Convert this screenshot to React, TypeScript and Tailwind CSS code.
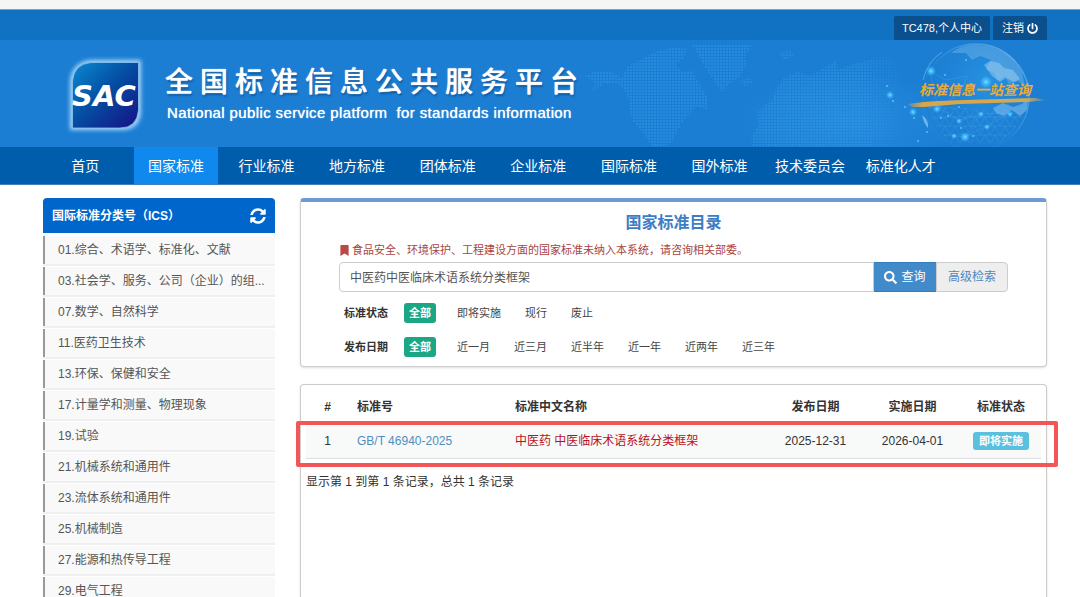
import { useState } from "react";
import { FaBookmark, FaPowerOff, FaSearch, FaSyncAlt } from "react-icons/fa";

const navItems = [
  "首页",
  "国家标准",
  "行业标准",
  "地方标准",
  "团体标准",
  "企业标准",
  "国际标准",
  "国外标准",
  "技术委员会",
  "标准化人才",
];

const icsItems = [
  "01.综合、术语学、标准化、文献",
  "03.社会学、服务、公司（企业）的组...",
  "07.数学、自然科学",
  "11.医药卫生技术",
  "13.环保、保健和安全",
  "17.计量学和测量、物理现象",
  "19.试验",
  "21.机械系统和通用件",
  "23.流体系统和通用件",
  "25.机械制造",
  "27.能源和热传导工程",
  "29.电气工程",
];

const statusOptions = ["全部", "即将实施", "现行", "废止"];
const dateOptions = ["全部", "近一月", "近三月", "近半年", "近一年", "近两年", "近三年"];

const Logo = () => {
  return (
    <svg viewBox="0 0 84 84" className="h-[84px] w-[84px] shrink-0" role="img" aria-label="SAC">
      <defs>
        <linearGradient id="logoFill" x1="0" y1="0" x2="1" y2="1">
          <stop offset="0" stopColor="#0a8ad2" />
          <stop offset="0.45" stopColor="#0450a4" />
          <stop offset="1" stopColor="#160f84" />
        </linearGradient>
        <filter id="glow" x="-20%" y="-20%" width="140%" height="140%">
          <feGaussianBlur stdDeviation="2" />
        </filter>
      </defs>
      <path d="M28 7H78V59Q77 77 58 77H7V28Q9 9 28 7Z" fill="#a9d6f8" filter="url(#glow)" />
      <path d="M28 9.500H75.500V57Q74 75 57 75H9.500V28Q11 11 28 9.500Z" fill="url(#logoFill)" stroke="#8cc4f0" strokeWidth="0.800" />
      <text
        x="9"
        y="53"
        fontSize="29"
        fontWeight="700"
        fontStyle="italic"
        fontFamily="DejaVu Sans, sans-serif"
        fill="#fff"
      >
        SAC
      </text>
    </svg>
  );
};

// dotted world map and the globe on the right side of the banner
const BannerArt = () => {
  return (
    <svg
      viewBox="580 40 500 107"
      className="absolute top-0 right-0 h-[107px] w-[500px]"
      aria-hidden="true"
    >
      <defs>
        <pattern id="dots" width="3" height="3" patternUnits="userSpaceOnUse">
          <rect width="2" height="2" fill="#36a0ea" />
        </pattern>
        <linearGradient id="fade" gradientUnits="userSpaceOnUse" x1="860" y1="0" x2="905" y2="0">
          <stop offset="0" stopColor="#fff" />
          <stop offset="1" stopColor="#000" />
        </linearGradient>
        <mask id="mapMask" maskUnits="userSpaceOnUse" x="580" y="40" width="340" height="107">
          <rect x="580" y="40" width="340" height="107" fill="url(#fade)" />
        </mask>
        <radialGradient id="globe" cx="0.6" cy="0.35" r="0.7">
          <stop offset="0" stopColor="#2e9be6" stopOpacity="0.700" />
          <stop offset="0.7" stopColor="#1d82d6" stopOpacity="0.400" />
          <stop offset="1" stopColor="#1b7ed3" stopOpacity="0.150" />
        </radialGradient>
        <radialGradient id="halo">
          <stop offset="0" stopColor="#2b93e4" stopOpacity="0.600" />
          <stop offset="1" stopColor="#2b93e4" stopOpacity="0" />
        </radialGradient>
        <radialGradient id="spark">
          <stop offset="0" stopColor="#7be4ff" />
          <stop offset="0.4" stopColor="#44c0ff" stopOpacity="0.850" />
          <stop offset="1" stopColor="#44c0ff" stopOpacity="0" />
        </radialGradient>
        <linearGradient id="brush" x1="0" x2="1">
          <stop offset="0" stopColor="#d8a548" stopOpacity="0.300" />
          <stop offset="0.1" stopColor="#dba544" />
          <stop offset="0.85" stopColor="#d5a755" />
          <stop offset="1" stopColor="#c9a766" stopOpacity="0.100" />
        </linearGradient>
        <linearGradient id="shell" x1="0" y1="1" x2="1" y2="0">
          <stop offset="0.45" stopColor="#9fd0f5" stopOpacity="0.050" />
          <stop offset="1" stopColor="#9fd0f5" stopOpacity="0.600" />
        </linearGradient>
        <pattern id="mesh" width="10" height="9" patternUnits="userSpaceOnUse">
          <path d="M0 9L5 0L10 9M0 0H10M0 9H10" stroke="#7cc0f2" strokeWidth="0.400" fill="none" opacity="0.400" />
        </pattern>
      </defs>
      <ellipse cx="850" cy="120" rx="110" ry="50" fill="url(#halo)" />
      <g fill="url(#dots)" opacity="0.400" mask="url(#mapMask)">
        <path d="M585 76L596 71L612 72L622 78L628 92L618 84L604 84L590 92L596 84Z" />
        <path d="M627 66L640 60L656 52L673 47L688 49L684 58L676 64L682 72L692 70L698 82L707 96L708 110L696 106L690 114L682 122L678 130L672 142L664 147H652L643 133L632 120L628 96L620 84Z" />
        <path d="M692 44H752L745 56L746 64L740 76L730 84L722 92L716 84L708 72L700 58Z" />
        <path d="M779 53L790 51L794 55L785 60ZM741 80L750 78L752 83L743 86Z" />
        <path d="M753 147L751 138L758 126L757 112L766 105L773 100L776 88L784 78L797 72L810 76L824 68L836 60L838 70L853 64L870 60L887 57L905 66V147Z" />
      </g>
      <circle cx="976" cy="97" r="53" fill="url(#globe)" />
      <path d="M927 103Q970 112 1025 108Q1018 130 1000 143H953Q932 130 927 103Z" fill="url(#mesh)" />
      <circle cx="976" cy="97" r="53" fill="none" stroke="url(#shell)" strokeWidth="1.300" />
      <path d="M951 53Q962 44 977 45Q1000 46 1014 60L1022 72L1025 86L1018 81L1009 84L1005 76L998 81L994 73L986 69L991 60L980 56L972 60L966 53Z" fill="#8fc6ee" opacity="0.350" />
      <path d="M984 65L990 61L999 63L1004 68L1013 70L1020 79L1014 82L1006 78L1000 82L992 76Z" fill="#a8d4f4" opacity="0.450" />
      <path d="M993 108L1003 103L1013 107L1022 104L1028 98L1027 110L1020 116L1012 110L1004 116L996 113Z" fill="#9bcdf2" opacity="0.450" />
      <path d="M922 115Q924 124 928 128Q929 120 922 115Z" fill="#8ecbf5" opacity="0.700" />
      <path d="M923 80Q927 62 942 52" stroke="#8ecbf5" strokeWidth="1" fill="none" opacity="0.500" />
      <path d="M930 71L946 80L967 76L962 92L938 108L960 120L980 114L965 137L954 136M980 114L1010 113L987 126L965 137M938 108L930 71" stroke="#6fbdf0" strokeWidth="0.500" fill="none" opacity="0.400" />
      <g fill="url(#spark)">
        <circle cx="890" cy="95" r="4" />
        <circle cx="913" cy="112" r="4" />
        <circle cx="931" cy="71" r="5" />
        <circle cx="937" cy="109" r="4" />
        <circle cx="965" cy="137" r="5" />
        <circle cx="954" cy="136" r="3" />
        <circle cx="986" cy="82" r="6" />
        <circle cx="981" cy="114" r="3" />
        <circle cx="959" cy="121" r="3" />
        <circle cx="987" cy="127" r="3" />
        <circle cx="1010" cy="114" r="3" />
      </g>
      <g fill="#5bcbff">
        <circle cx="887" cy="86" r="0.900" />
        <circle cx="893" cy="101" r="0.900" />
        <circle cx="905" cy="107" r="0.900" />
        <circle cx="914" cy="118" r="0.900" />
        <circle cx="945" cy="75" r="0.900" />
        <circle cx="966" cy="60" r="0.900" />
        <circle cx="948" cy="116" r="0.900" />
        <circle cx="941" cy="118" r="0.900" />
        <circle cx="961" cy="128" r="0.900" />
        <circle cx="973" cy="136" r="0.900" />
        <circle cx="927" cy="132" r="0.900" />
        <circle cx="918" cy="141" r="0.900" />
        <circle cx="959" cy="107" r="0.900" />
      </g>
      <path d="M908 104Q925 101 965 100L1035 98L1047 100L1028 102L960 104L924 107L912 107Z" fill="url(#brush)" />
      <text
        x="919"
        y="95"
        fontSize="14"
        fontStyle="italic"
        fontWeight="700"
        fontFamily="Noto Sans CJK SC, sans-serif"
        fill="#e9aa3a"
      >
        标准信息一站查询
      </text>
    </svg>
  );
};

const Header = () => {
  return (
    <header>
      <div className="h-[9px] bg-[#f5f5f5]" />
      <div className="flex h-[31px] items-end justify-end gap-[3px] border-t border-[#6fa3d8] bg-[#1172c4] pr-[33px] text-[11px] text-white">
        <a href="#" className="flex h-6 items-center rounded-t-xs bg-[#0b4f8c] px-2">
          TC478,个人中心
        </a>
        <a href="#" className="flex h-6 items-center gap-[3px] rounded-t-xs bg-[#0b4f8c] px-[9px]">
          注销 <FaPowerOff />
        </a>
      </div>
      <div className="relative flex h-[107px] items-center gap-[18px] bg-[#1b7ed3] pt-[2px] pl-[63px]">
        <BannerArt />
        <Logo />
        <div className="relative text-white">
          <h1 className="text-[28px] leading-[36px] font-medium tracking-[0.25em] [text-shadow:0_0_1px_#fff,1px_2px_2px_rgba(0,50,110,0.5)]">
            全国标准信息公共服务平台
          </h1>
          <p className="pl-[2px] text-[15px] leading-6 tracking-wide whitespace-pre [text-shadow:0_0_1px_#fff]">
            National public service platform  for standards information
          </p>
        </div>
      </div>
    </header>
  );
};

const Nav = () => {
  const [active, setActive] = useState("国家标准");

  return (
    <nav className="border-b border-[#3f7fc0] bg-[#005dac] pl-10">
      <ul className="grid max-w-[906px] grid-cols-10">
        {navItems.map((item) => (
          <li key={item} className="px-[3px]">
            <a
              href="#"
              onClick={() => setActive(item)}
              className={`flex h-[37px] items-center justify-center text-sm whitespace-nowrap text-white ${
                active === item ? "bg-[#1089ee]" : ""
              }`}
            >
              {item}
            </a>
          </li>
        ))}
      </ul>
    </nav>
  );
};

const Sidebar = () => {
  return (
    <aside className="w-[232px] shrink-0">
      <div className="flex h-[35px] items-center justify-between rounded-t bg-[#0066cc] px-[9px] text-white">
        <h2 className="text-xs font-bold">国际标准分类号（ICS）</h2>
        <button type="button" aria-label="刷新">
          <FaSyncAlt className="text-base" />
        </button>
      </div>
      <ul className="flex flex-col gap-px pt-[3px]">
        {icsItems.map((item) => (
          <li key={item} className="border-b-2 border-[#efefef]">
            <a
              href="#"
              className="block border-l-2 border-[#999] bg-[#f9f9f9] pl-[13px] text-xs leading-7 whitespace-nowrap text-[#555]"
            >
              {item}
            </a>
          </li>
        ))}
      </ul>
    </aside>
  );
};

type FilterRowProps = {
  label: string;
  options: string[];
};

const FilterRow = ({ label, options }: FilterRowProps) => {
  const [selected, setSelected] = useState(options[0]);

  return (
    <div className="flex h-5 items-center text-[11px] text-[#444]">
      <span className="w-[60px] font-bold text-[#333]">{label}</span>
      <div className="flex items-center gap-3">
        {options.map((option) => (
          <button
            key={option}
            type="button"
            onClick={() => setSelected(option)}
            className={`h-5 rounded-[3px] ${
              selected === option ? "mr-[3px] bg-[#1ba784] px-[5px] font-bold text-white" : "px-[6px]"
            }`}
          >
            {option}
          </button>
        ))}
      </div>
    </div>
  );
};

const SearchPanel = () => {
  const [keyword, setKeyword] = useState("中医药中医临床术语系统分类框架");

  return (
    <section className="rounded border border-t-4 border-[#ccc] border-t-[#6c9bd2] pr-[38px] pb-[9px] pl-[38px] shadow-sm">
      <h2 className="pt-[9px] text-center text-base leading-6 font-bold text-[#3c7dc6]">国家标准目录</h2>
      <p className="mt-[3px] flex h-6 items-center gap-[2px] text-[11px] text-[#a94442]">
        <FaBookmark className="text-[11px] text-[#b94a48]" />
        食品安全、环境保护、工程建设方面的国家标准未纳入本系统，请咨询相关部委。
      </p>
      <form className="flex h-[30px] text-xs" onSubmit={(e) => e.preventDefault()}>
        <input
          type="text"
          aria-label="标准关键词"
          value={keyword}
          onChange={(e) => setKeyword(e.target.value)}
          className="min-w-0 flex-1 rounded-l border border-[#ccc] px-[10px] pt-[2px] text-[#555] outline-none"
        />
        <button
          type="submit"
          className="flex w-[62px] items-center justify-center gap-1 border-y border-[#357ebd] bg-[#428bca] text-white"
        >
          <FaSearch className="text-[13px]" />
          查询
        </button>
        <button type="button" className="w-[72px] rounded-r border border-[#ccc] bg-[#eee] text-[#5087c1]">
          高级检索
        </button>
      </form>
      <div className="mt-[11px] flex flex-col gap-[14px] pl-[5px]">
        <FilterRow label="标准状态" options={statusOptions} />
        <FilterRow label="发布日期" options={dateOptions} />
      </div>
    </section>
  );
};

const ResultPanel = () => {
  return (
    <section className="relative flex-1 rounded-t border border-b-0 border-[#ccc] px-[5px] pt-[5px] text-xs text-[#333] shadow-sm">
      <table className="w-full table-fixed">
        <thead>
          <tr className="h-[34px]">
            <th className="w-[43px]">#</th>
            <th className="w-[158px] pl-2 text-left">标准号</th>
            <th className="pl-2 text-left">标准中文名称</th>
            <th className="w-[97px]">发布日期</th>
            <th className="w-[97px]">实施日期</th>
            <th className="w-20">标准状态</th>
          </tr>
        </thead>
        <tbody>
          <tr className="h-[34px] border-b border-[#ddd] bg-[#f8f9f9] text-center">
            <td>1</td>
            <td className="pl-2 text-left">
              <a href="#" className="text-[#4f8fc0]">
                GB/T 46940-2025
              </a>
            </td>
            <td className="pl-2 text-left">
              <a href="#" className="text-[#b8111b]">
                中医药 中医临床术语系统分类框架
              </a>
            </td>
            <td>2025-12-31</td>
            <td>2026-04-01</td>
            <td>
              <span className="inline-block h-[18px] rounded-[3px] bg-[#5bc0de] px-[6px] text-[11px] leading-[18px] font-bold text-white">
                即将实施
              </span>
            </td>
          </tr>
        </tbody>
      </table>
      <p className="mt-[13px] leading-5">显示第 1 到第 1 条记录，总共 1 条记录</p>
      {/* highlight frame around the first record */}
      <div className="pointer-events-none absolute top-9 -right-3 -left-[5px] h-[46px] rounded-xs border-4 border-[#f25656]" />
    </section>
  );
};

export default function App() {
  return (
    <div className="flex h-screen flex-col overflow-hidden bg-white font-['Liberation_Sans','Noto_Sans_CJK_SC',sans-serif]">
      <Header />
      <Nav />
      <div className="flex min-h-0 flex-1 gap-[25px] pt-[13px] pr-[33px] pl-[43px]">
        <Sidebar />
        <main className="flex min-w-0 flex-1 flex-col gap-[17px]">
          <SearchPanel />
          <ResultPanel />
        </main>
      </div>
    </div>
  );
}
